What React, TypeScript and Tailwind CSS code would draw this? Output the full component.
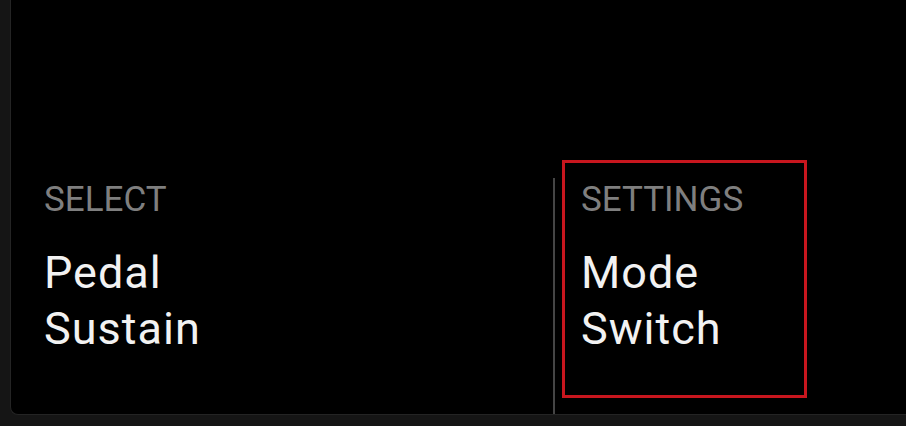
import React from 'react';

interface ColumnProps {
  label: string;
  lines: string[];
}

function ColumnText({ label, lines }: ColumnProps) {
  return (
    <div>
      <div className="text-[35px] leading-[42px] text-[#7f7f7f]">{label}</div>
      <div className="mt-[24px] text-[45px] leading-[56px] tracking-[1px] text-[#f2f2f2]">
        {lines.map((line) => (
          <div key={line}>{line}</div>
        ))}
      </div>
    </div>
  );
}

export default function App() {
  return (
    <div
      className="w-[906px] h-[426px] bg-[#151515] pl-[10px] pb-[11px] overflow-hidden"
      style={{ fontFamily: 'Roboto, "Noto Sans", sans-serif' }}
    >
      <div className="h-full flex flex-col justify-end bg-black border-l border-b border-[#242424] rounded-bl-[8px]">
        <div className="h-[254px] flex">
          {/* Select column */}
          <div className="w-[542px] pl-[33px] pt-[19px]">
            <ColumnText label="SELECT" lines={['Pedal', 'Sustain']} />
          </div>

          {/* Divider */}
          <div className="self-end w-[2px] h-[236px] bg-[#454545]" />

          {/* Settings column (highlighted) */}
          <div className="ml-[7px] pb-[16px]">
            <div className="w-[245px] h-full border-[3px] border-[#c8161e] pt-[16px] pl-[16px]">
              <ColumnText label="SETTINGS" lines={['Mode', 'Switch']} />
            </div>
          </div>
        </div>
      </div>
    </div>
  );
}
